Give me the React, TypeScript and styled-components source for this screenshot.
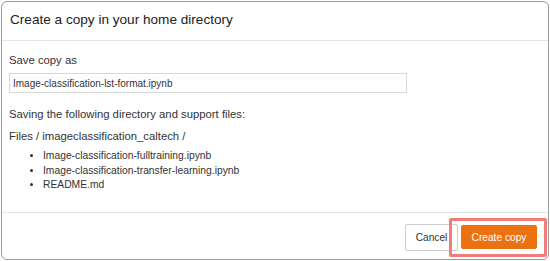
import React from "react";
import styled, { createGlobalStyle } from "styled-components";

const Global = createGlobalStyle`
  html, body { margin: 0; padding: 0; background: #ffffff; }
  body { font-family: "Liberation Sans", Arial, sans-serif; color: #333; }
  * { box-sizing: border-box; }
`;

const Dialog = styled.div`
  margin: 1px;
  width: 548px;
  height: 259px;
  border: 1px solid #9c9c9c;
  border-radius: 6px;
  background: #fff;
  display: flex;
  flex-direction: column;
`;

const Header = styled.div`
  height: 39px;
  padding: 10px 8px 0 8px;
  border-bottom: 1px solid #e5e5e5;
`;

const Title = styled.h4`
  margin: 0;
  font-size: 13.6px;
  line-height: 16px;
  font-weight: normal;
  color: #222;
`;

const Body = styled.div`
  flex: 1;
  padding: 0 7px;
  font-size: 11.3px;
  line-height: 14px;
  color: #333;
  border-bottom: 1px solid #e5e5e5;
`;

const Label = styled.div`
  margin-top: 12px;
`;

const Input = styled.input`
  display: block;
  margin-top: 6px;
  width: 398px;
  height: 20px;
  padding: 0 3px;
  border: 1px solid #d9d9d9;
  font-family: "Liberation Sans", Arial, sans-serif;
  font-size: 10px;
  color: #333;
  outline: none;
`;

const Para = styled.p<{ $top: number }>`
  margin: ${(p) => p.$top}px 0 0 0;
`;

const List = styled.ul`
  margin: 6px 0 0 0;
  padding-left: 34px;
  font-size: 10.3px;
  line-height: 14.5px;
`;

const Footer = styled.div`
  height: 46px;
  display: flex;
  justify-content: flex-end;
  align-items: center;
  padding: 2px 11px 0 0;
  gap: 3px;
`;

const Button = styled.button<{ $primary?: boolean }>`
  font-family: "Liberation Sans", Arial, sans-serif;
  font-size: 10.2px;
  height: ${(p) => (p.$primary ? "24px" : "27px")};
  width: ${(p) => (p.$primary ? "76px" : "53px")};
  padding: 0;
  border-radius: 2px;
  border: 1px solid ${(p) => (p.$primary ? "#ec7211" : "#cccccc")};
  background: ${(p) => (p.$primary ? "#ec7211" : "#ffffff")};
  color: ${(p) => (p.$primary ? "#ffffff" : "#333333")};
  cursor: pointer;
`;

const Spot = styled.div`
  position: relative;
  display: flex;
`;

const Highlight = styled.div`
  position: absolute;
  left: -12px;
  right: -10px;
  top: -7px;
  bottom: -8px;
  border: 3px solid #f27b7b;
  border-radius: 2px;
  pointer-events: none;
`;

export default function App() {
  return (
    <>
      <Global />
      <Dialog>
        <Header>
          <Title>Create a copy in your home directory</Title>
        </Header>
        <Body>
          <Label>Save copy as</Label>
          <Input defaultValue="Image-classification-lst-format.ipynb" />
          <Para $top={14}>Saving the following directory and support files:</Para>
          <Para $top={8}>Files / imageclassification_caltech /</Para>
          <List>
            <li>Image-classification-fulltraining.ipynb</li>
            <li>Image-classification-transfer-learning.ipynb</li>
            <li>README.md</li>
          </List>
        </Body>
        <Footer>
          <Button>Cancel</Button>
          <Spot>
            <Button $primary>Create copy</Button>
            <Highlight />
          </Spot>
        </Footer>
      </Dialog>
    </>
  );
}
